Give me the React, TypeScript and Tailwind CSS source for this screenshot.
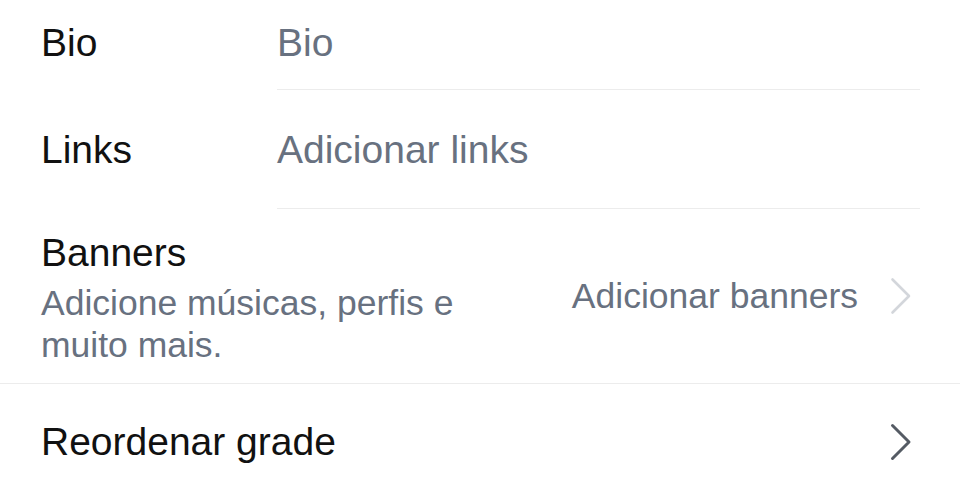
import { ReactNode } from "react"

function Chevron({ light }: { light?: boolean }) {
  return (
    <svg
      width="22"
      height="38"
      viewBox="0 0 22 38"
      fill="none"
      className={light ? "text-[#d3d6db]" : "text-[#555b64]"}
    >
      <polyline
        points="2.5,2.5 19,19 2.5,35.5"
        stroke="currentColor"
        strokeWidth={light ? 2.6 : 3}
        strokeLinecap="round"
        strokeLinejoin="round"
      />
    </svg>
  )
}

function FieldRow({
  label,
  value,
  className
}: {
  label: string
  value: ReactNode
  className: string
}) {
  return (
    <div className="flex pl-[41px] pr-[40px]">
      <div className={`w-[236px] shrink-0 text-[#111111] ${className}`}>{label}</div>
      <div className={`flex-1 border-b border-[#ececec] text-[#687180] ${className}`}>
        {value}
      </div>
    </div>
  )
}

export default function App() {
  return (
    <div
      className="w-[960px] h-[480px] overflow-hidden bg-white text-[39px] leading-[44px]"
      style={{ fontFamily: '"Liberation Sans", Arial, sans-serif' }}
    >
      {/* Bio */}
      <FieldRow label="Bio" value="Bio" className="pt-[21px] pb-[24px]" />

      {/* Links */}
      <FieldRow label="Links" value="Adicionar links" className="pt-[38px] pb-[36px]" />

      {/* Banners */}
      <div className="flex items-center justify-between border-b border-[#ececec] pl-[41px] pr-[48px] pt-[22px] pb-[17px]">
        <div className="flex flex-col">
          <span className="text-[#111111]">Banners</span>
          <span className="mt-[7px] w-[440px] text-[35.5px] leading-[42px] text-[#687180]">
            Adicione músicas, perfis e muito mais.
          </span>
        </div>
        <div className="flex items-center gap-[32px] text-[35.5px] leading-[42px] text-[#687180] mb-[6px]">
          <span>Adicionar banners</span>
          <Chevron light />
        </div>
      </div>

      {/* Reordenar grade */}
      <div className="flex items-center justify-between pl-[41px] pr-[48px] pt-[36px]">
        <span className="text-[#111111]">Reordenar grade</span>
        <Chevron />
      </div>
    </div>
  )
}
